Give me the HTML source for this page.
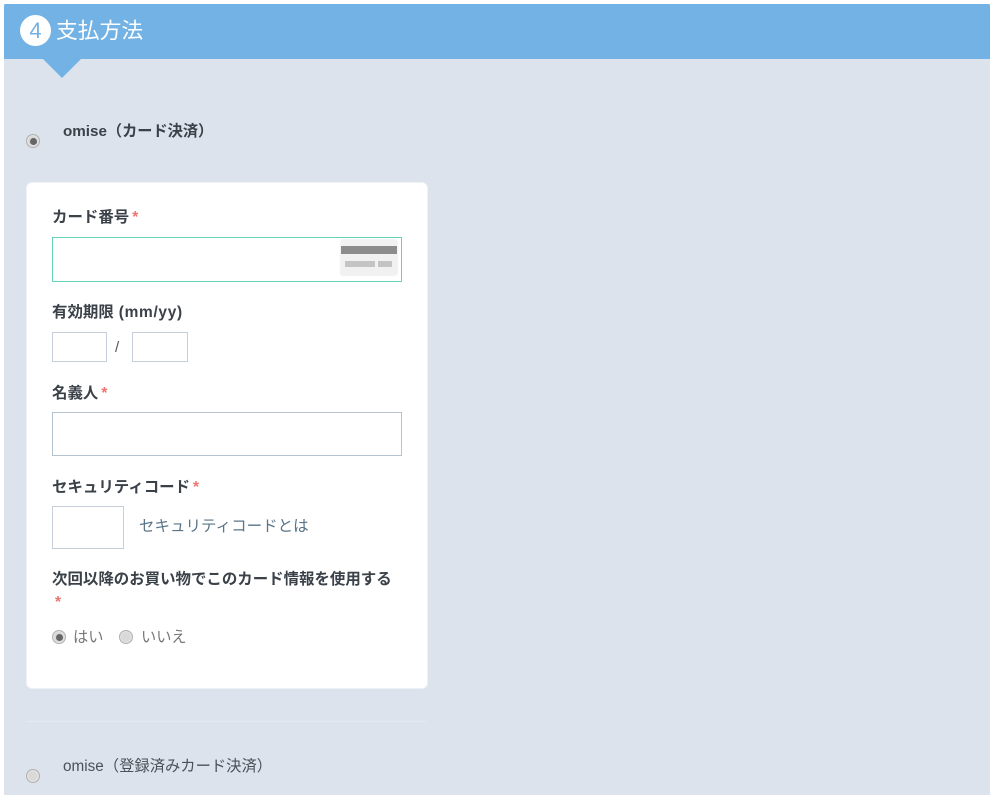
<!DOCTYPE html>
<html lang="ja">
<head>
<meta charset="utf-8">
<style>
html,body{margin:0;padding:0;width:1000px;height:795px;overflow:hidden;background:#fff;}
body{font-family:"Liberation Sans","Noto Sans CJK JP",sans-serif;color:#3a4149;position:relative;}
#w{position:absolute;left:0;top:0;width:1000px;height:795px;filter:blur(0.3px);}
.a{position:absolute;white-space:nowrap;}
.panel{left:4px;top:4px;width:986px;height:791px;background:#dce3ec;}
.head{left:4px;top:4px;width:986px;height:55px;background:#73b2e4;border-radius:2px 2px 0 0;}
.tri{left:43px;top:59px;width:0;height:0;border-left:19px solid transparent;border-right:19px solid transparent;border-top:19px solid #73b2e4;}
.num{left:20px;top:15px;width:31px;height:31px;border-radius:50%;background:#fff;color:#73b2e4;font-size:22px;line-height:31px;text-align:center;}
.title{left:56px;top:16px;font-size:21.8px;line-height:30px;color:#fff;}
.card{left:26px;top:182px;width:400px;height:505px;background:#fff;border-radius:6px;border:1px solid #eef1f5;}
.lab{font-size:15.45px;font-weight:bold;line-height:20px;color:#3a4149;}
.req{color:#f0736e;}
.inp{background:#fff;border:1px solid #c6cfd9;box-sizing:border-box;}
.radio{width:14px;height:14px;border-radius:50%;box-sizing:border-box;border:1px solid #b0b0b0;background:#d9d9d9;box-shadow:inset 0 0 1px 1px #e4e4e4;}
.radio.on{background:#d8d8d8;}
.radio.on:after{content:"";position:absolute;left:2.5px;top:2.5px;width:7px;height:7px;border-radius:50%;background:#666;}
.opt{font-size:15.2px;line-height:20px;color:#777;}
</style>
</head>
<body>
<div id="w">
<div class="a panel"></div>
<div class="a head"></div>
<div class="a tri"></div>
<div class="a num">4</div>
<div class="a title">支払方法</div>

<div class="a radio on" style="left:26px;top:134px;"></div>
<div class="a lab" style="left:63px;top:122px;font-size:15.2px;">omise（カード決済）</div>

<div class="a card"></div>

<div class="a lab" style="left:52px;top:208px;">カード番号<span class="req" style="margin-left:3px;">*</span></div>
<div class="a inp" style="left:52px;top:237px;width:350px;height:45px;border:1.5px solid #62d4b8;"></div>
<div class="a" style="left:341px;top:240px;width:56px;height:35px;background:#f1f1f1;border-radius:2px;box-shadow:0 0 2px #ddd;"></div>
<div class="a" style="left:341px;top:246px;width:56px;height:8px;background:#8c8c8c;"></div>
<div class="a" style="left:345px;top:261px;width:30px;height:6px;background:#c4c4c4;"></div>
<div class="a" style="left:378px;top:261px;width:14px;height:6px;background:#c4c4c4;"></div>

<div class="a lab" style="left:52px;top:303px;">有効期限<span style="letter-spacing:.7px;"> (mm/yy)</span></div>
<div class="a inp" style="left:52px;top:332px;width:55px;height:30px;"></div>
<div class="a" style="left:115px;top:338px;font-size:15px;line-height:20px;color:#555;">/</div>
<div class="a inp" style="left:132px;top:332px;width:56px;height:30px;"></div>

<div class="a lab" style="left:52px;top:384px;">名義人<span class="req" style="margin-left:3px;">*</span></div>
<div class="a inp" style="left:52px;top:412px;width:350px;height:44px;border-color:#b4c3cf;"></div>

<div class="a lab" style="left:52px;top:478px;">セキュリティコード<span class="req" style="margin-left:3px;">*</span></div>
<div class="a inp" style="left:52px;top:506px;width:72px;height:43px;"></div>
<div class="a" style="left:139px;top:517px;font-size:15.5px;line-height:20px;color:#5a7488;">セキュリティコードとは</div>

<div class="a lab" style="left:52px;top:570px;">次回以降のお買い物でこのカード情報を使用する</div>
<div class="a lab req" style="left:55px;top:593px;">*</div>

<div class="a radio on" style="left:52px;top:630px;"></div>
<div class="a opt" style="left:73px;top:628px;">はい</div>
<div class="a radio" style="left:119px;top:630px;"></div>
<div class="a opt" style="left:141px;top:628px;">いいえ</div>

<div class="a" style="left:26px;top:721px;width:400px;height:1px;background:#e5eaf0;"></div>

<div class="a radio" style="left:26px;top:769px;"></div>
<div class="a" style="left:63px;top:757px;font-size:15.3px;line-height:20px;color:#4a5159;">omise（登録済みカード決済）</div>
</div>
</body>
</html>
